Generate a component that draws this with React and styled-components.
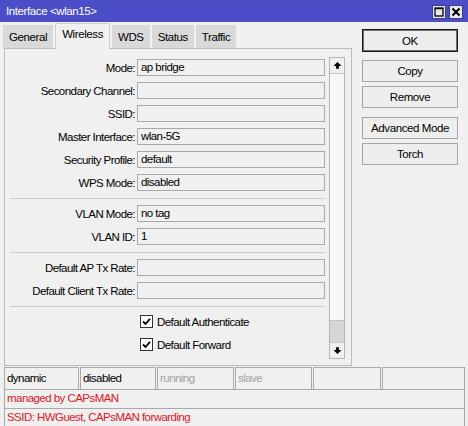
import React from "react"
import styled, { createGlobalStyle } from "styled-components"

const GlobalStyle = createGlobalStyle`
  body {
    margin: 0;
    background: #f0f0f0;
    font-family: "Liberation Sans", Arial, sans-serif;
    font-size: 11.5px;
    letter-spacing: -0.55px;
    color: #000;
  }
`

const Window = styled.div`
  width: 468px;
  height: 426px;
  display: flex;
  flex-direction: column;
  background: #f0f0f0;
  overflow: hidden;
`

const TitleBar = styled.div`
  height: 22px;
  flex: none;
  background: #4b4ec6;
  color: #fff;
  display: flex;
  align-items: center;
  justify-content: space-between;
  padding: 0 5px 0 6px;
  letter-spacing: -0.4px;
`

const TitleButtons = styled.div`
  display: flex;
  gap: 3px;
  padding-top: 1px;
`

const TitleButton = styled.div`
  width: 14px;
  height: 14px;
  box-sizing: border-box;
  background: #e8e8e8;
  border: 1px solid #3a3a8a;
  display: flex;
  align-items: center;
  justify-content: center;
`

const Main = styled.div`
  height: 344px;
  flex: none;
  display: flex;
  padding-left: 4px;
`

const LeftCol = styled.div`
  width: 348px;
  display: flex;
  flex-direction: column;
`

const TabRow = styled.div`
  height: 26px;
  display: flex;
  align-items: flex-end;
  gap: 2px;
  margin-left: -1px;
  position: relative;
  z-index: 1;
`

const Tab = styled.div`
  box-sizing: border-box;
  height: ${p => (p.$active ? "26px" : "23px")};
  padding: ${p => (p.$active ? "4px 6px 0" : "6px 6px 0")};
  background: ${p => (p.$active ? "#f0f0f0" : "#d9d9d9")};
  border: ${p => (p.$active ? "1px solid #d0d0d0" : "none")};
  border-bottom: none;
  margin-bottom: ${p => (p.$active ? "-1px" : "0")};
  letter-spacing: -0.4px;
`

const Panel = styled.div`
  height: 318px;
  box-sizing: border-box;
  border: 1px solid #bcbcbc;
  display: flex;
  padding: 8px 6px 6px 5px;
`

const Form = styled.div`
  flex: 1;
  display: flex;
  flex-direction: column;
  gap: 6px;
  padding: 2px 4px 0 0;
`

const Row = styled.div`
  height: 17px;
  display: flex;
  align-items: center;
`

const Label = styled.div`
  width: 125px;
  padding-right: 2px;
  text-align: right;
  white-space: nowrap;
`

const Field = styled.div`
  flex: 1;
  height: 17px;
  box-sizing: border-box;
  border: 1px solid #a9a9a9;
  background: #f0f0f0;
  padding-left: 3px;
  line-height: 15px;
`

const Separator = styled.div`
  height: 1px;
  margin-top: 1px;
  background: #cbcbcb;
`

const CheckRow = styled.label`
  height: 17px;
  display: flex;
  align-items: center;
  gap: 4px;
  padding-left: 130px;
`

const Box = styled.span`
  width: 13px;
  height: 13px;
  box-sizing: border-box;
  border: 1px solid #333;
  background: #fff;
  display: flex;
  align-items: center;
  justify-content: center;
`

const Scrollbar = styled.div`
  width: 16px;
  box-sizing: border-box;
  border: 1px solid #b4b4b4;
  background: #f7f7f7;
  display: flex;
  flex-direction: column;
`

const ScrollButton = styled.div`
  height: 15px;
  flex: none;
  display: flex;
  align-items: center;
  justify-content: center;
  background: #f0f0f0;
  border-top: ${p => (p.$down ? "1px solid #c8c8c8" : "none")};
  border-bottom: ${p => (p.$down ? "none" : "1px solid #c8c8c8")};
`

const Thumb = styled.div`
  margin-top: auto;
  height: 21px;
  background: #d6d6d6;
  border-top: 1px solid #c4c4c4;
`

const RightCol = styled.div`
  width: 96px;
  margin-left: 10px;
  padding-top: 7px;
  display: flex;
  flex-direction: column;
`

const Button = styled.div`
  height: ${p => (p.$primary ? "23px" : "22px")};
  box-sizing: border-box;
  margin-top: ${p => p.$gap || 0}px;
  border: 1px solid ${p => (p.$primary ? "#1a1a1a" : "#a6a6a6")};
  box-shadow: ${p => (p.$primary ? "inset 0 0 0 1px #6c6c6c" : "none")};
  background: #eeeeee;
  display: flex;
  align-items: center;
  justify-content: center;
  letter-spacing: -0.4px;
`

const StatusRow = styled.div`
  margin-left: 4px;
  width: 461px;
  height: 23px;
  flex: none;
  display: flex;
  gap: 1px;
  padding-top: 1px;
  box-sizing: border-box;
`

const Cell = styled.div`
  width: ${p => p.$w}px;
  box-sizing: border-box;
  border: 1px solid #a9a9a9;
  border-bottom: none;
  padding-left: 2px;
  line-height: 20px;
  color: ${p => (p.$muted ? "#a3a3a3" : "#000")};
`

const Message = styled.div`
  margin-left: 4px;
  width: 461px;
  height: 19px;
  flex: none;
  box-sizing: border-box;
  border: 1px solid #a9a9a9;
  border-bottom: none;
  padding-left: 2px;
  line-height: 17px;
  color: #e3161f;
`

const Arrow = ({ down }) => (
  <svg width="9" height="9" viewBox="0 0 10 10" style={down ? { transform: "rotate(180deg)" } : undefined}>
    <path d="M5 1 L9.5 5.5 L6.6 5.5 L6.6 8.5 L3.4 8.5 L3.4 5.5 L0.5 5.5 Z" fill="#000" />
  </svg>
)

const Check = () => (
  <svg width="9" height="9" viewBox="0 0 9 9">
    <path d="M1 4.5 L3.5 7 L8 1.8" stroke="#000" strokeWidth="1.8" fill="none" />
  </svg>
)

const tabs = ["General", "Wireless", "WDS", "Status", "Traffic"]

const fields = [
  [["Mode:", "ap bridge"], ["Secondary Channel:", ""], ["SSID:", ""], ["Master Interface:", "wlan-5G"], ["Security Profile:", "default"], ["WPS Mode:", "disabled"]],
  [["VLAN Mode:", "no tag"], ["VLAN ID:", "1"]],
  [["Default AP Tx Rate:", ""], ["Default Client Tx Rate:", ""]],
]

const cells = [
  { w: 75, t: "dynamic" },
  { w: 76, t: "disabled" },
  { w: 77, t: "running", muted: true },
  { w: 77, t: "slave", muted: true },
  { w: 68, t: "" },
  { w: 83, t: "" },
]

export default function App() {
  return (
    <Window>
      <GlobalStyle />
      <TitleBar>
        <span>Interface &lt;wlan15&gt;</span>
        <TitleButtons>
          <TitleButton>
            <svg width="10" height="10" viewBox="0 0 10 10">
              <rect x="1" y="1" width="8" height="8" fill="none" stroke="#000" strokeWidth="1.3" />
              <line x1="1" y1="1.6" x2="9" y2="1.6" stroke="#000" strokeWidth="1.3" />
            </svg>
          </TitleButton>
          <TitleButton>
            <svg width="10" height="10" viewBox="0 0 10 10">
              <path d="M1.5 1.5 L8.5 8.5 M8.5 1.5 L1.5 8.5" stroke="#000" strokeWidth="2" />
            </svg>
          </TitleButton>
        </TitleButtons>
      </TitleBar>

      <Main>
        <LeftCol>
          <TabRow>
            {tabs.map(t => (
              <Tab key={t} $active={t === "Wireless"}>{t}</Tab>
            ))}
          </TabRow>
          <Panel>
            <Form>
              {fields.map((group, gi) => (
                <React.Fragment key={gi}>
                  {group.map(([label, value]) => (
                    <Row key={label}>
                      <Label>{label}</Label>
                      <Field>{value}</Field>
                    </Row>
                  ))}
                  <Separator />
                </React.Fragment>
              ))}
              <CheckRow>
                <Box><Check /></Box>
                Default Authenticate
              </CheckRow>
              <CheckRow>
                <Box><Check /></Box>
                Default Forward
              </CheckRow>
            </Form>
            <Scrollbar>
              <ScrollButton><Arrow /></ScrollButton>
              <Thumb />
              <ScrollButton $down><Arrow down /></ScrollButton>
            </Scrollbar>
          </Panel>
        </LeftCol>

        <RightCol>
          <Button $primary>OK</Button>
          <Button $gap={8}>Copy</Button>
          <Button $gap={4}>Remove</Button>
          <Button $gap={9}>Advanced Mode</Button>
          <Button $gap={4}>Torch</Button>
        </RightCol>
      </Main>

      <StatusRow>
        {cells.map((c, i) => (
          <Cell key={i} $w={c.w} $muted={c.muted}>{c.t}</Cell>
        ))}
      </StatusRow>
      <Message>managed by CAPsMAN</Message>
      <Message>SSID: HWGuest, CAPsMAN forwarding</Message>
    </Window>
  )
}
